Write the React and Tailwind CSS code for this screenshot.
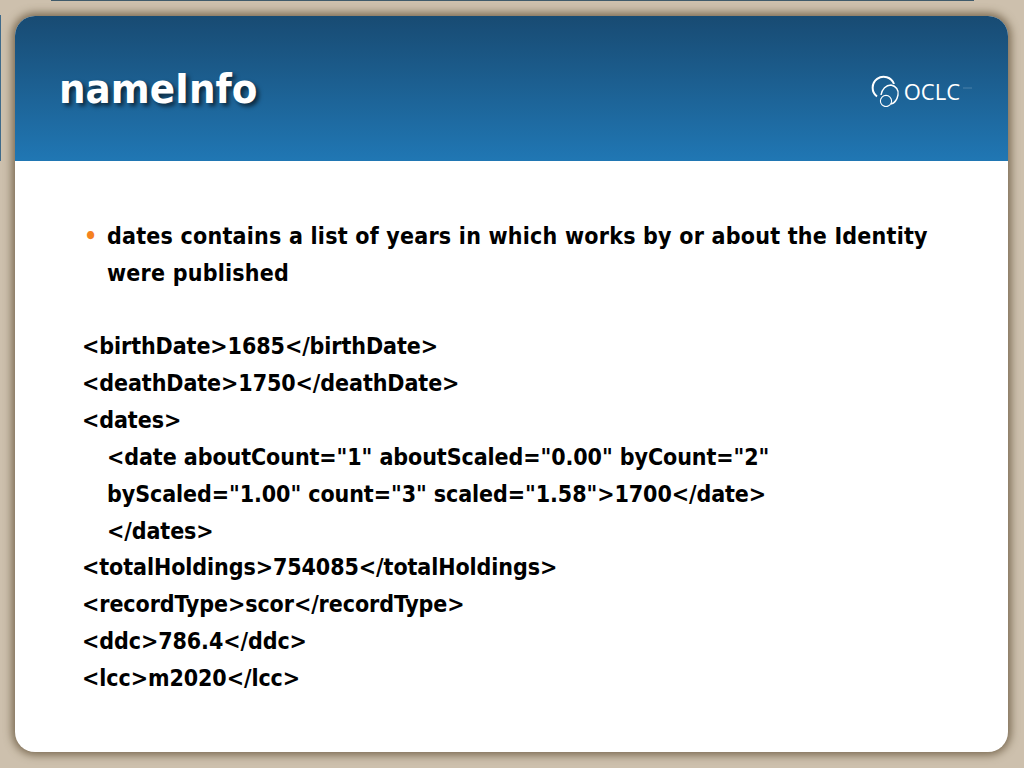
import React from 'react';

const lines = [
  { text: '<birthDate>1685</birthDate>' },
  { text: '<deathDate>1750</deathDate>' },
  { text: '<dates>' },
  { text: '<date aboutCount="1" aboutScaled="0.00" byCount="2"', indent: true },
  { text: 'byScaled="1.00" count="3" scaled="1.58">1700</date>', indent: true },
  { text: '</dates>', indent: true },
  { text: '<totalHoldings>754085</totalHoldings>' },
  { text: '<recordType>scor</recordType>' },
  { text: '<ddc>786.4</ddc>' },
  { text: '<lcc>m2020</lcc>' },
];

const OclcLogo = () => (
  <div className="flex items-center mt-[2px]">
    <svg width="30" height="32" viewBox="0 0 30 32" fill="none" stroke="white">
      <path d="M6 21.5 A11 11 0 1 1 23 9" strokeWidth="2" />
      <path d="M10 20 C11 14 15 10 20 10 C25 11 28 15 27 20 C26 25 24 28 20 29" strokeWidth="1.4" />
      <circle cx="15" cy="26" r="5.6" strokeWidth="1.1" />
    </svg>
    <span className="ml-[3px] text-[22px] leading-none text-white font-['Open_Sans',sans-serif]">OCLC</span>
    <span className="ml-[3px] w-[9px] h-[2px] mb-[6px] bg-white/10"></span>
  </div>
);

const App = () => {
  return (
    <div className="w-[1024px] h-[768px] overflow-hidden bg-[#cdc0ad] relative pt-[16px] pl-[15px] font-['DejaVu_Sans_Condensed','DejaVu_Sans',sans-serif]">
      {/* dark slivers of the slide behind the frame */}
      <div className="absolute top-0 left-[51px] w-[923px] h-[1px] bg-[#3f5a6a]"></div>
      <div className="absolute top-[15px] left-0 w-[1px] h-[146px] bg-[#3f6a8a]"></div>
      <div className="w-[993px] h-[736px] rounded-[20px] overflow-hidden bg-white shadow-[0_0_9px_3px_rgba(95,78,52,0.75)]">
        {/* Header */}
        <div className="h-[145px] pt-[2px] bg-gradient-to-b from-[#184b73] to-[#2077b4] flex items-center justify-between pl-[44px] pr-[36px]">
          <h1 className="text-[41.5px] font-bold text-white [text-shadow:3px_3px_4px_rgba(0,0,0,0.6)]">nameInfo</h1>
          <OclcLogo />
        </div>

        {/* Body */}
        <div className="pt-[57px] pl-[69px] pr-[60px] text-[23px] leading-[37px] font-bold text-black">
          <div className="flex">
            <span className="w-[23px] text-[#f5821f]">•</span>
            <p className="flex-1 tracking-[0.22px]">dates contains a list of years in which works by or about the Identity were published</p>
          </div>
          <div className="h-[36px]"></div>
          <div className="-ml-[2px] tracking-[-0.08px] leading-[36.9px]">
            {lines.map((line) => (
              <div key={line.text} className={line.indent ? 'pl-[25px]' : ''}>{line.text}</div>
            ))}
          </div>
        </div>
      </div>
    </div>
  );
};

export default App;
